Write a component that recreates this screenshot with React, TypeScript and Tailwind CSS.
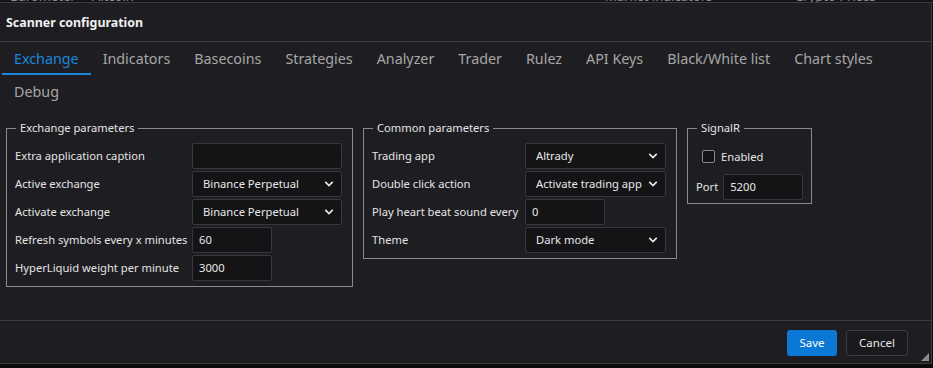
import React from "react";

const Chevron = () => (
  <svg width="10" height="7" viewBox="0 0 10 7" className="absolute right-[7px] top-1/2 -translate-y-1/2">
    <path d="M1.3 1.4 L5 5 L8.7 1.4" fill="none" stroke="#e6e6e6" strokeWidth="1.7" />
  </svg>
);

const Input = ({ value = "", w }: { value?: string; w: string }) => (
  <div className={`${w} h-[26px] bg-[#141417] border border-[#38383c] rounded-[2px] flex items-center pl-[6px] pt-[1px] text-[#e8e8e8]`}>
    {value}
  </div>
);

const Select = ({ value, w }: { value: string; w: string }) => (
  <div className={`${w} relative h-[26px] bg-[#141417] border border-[#38383c] rounded-[2px] flex items-center pl-[10px] pt-[1px] text-[#e8e8e8]`}>
    {value}
    <Chevron />
  </div>
);

const Row = ({ label, labelW, children }: { label: string; labelW: string; children: React.ReactNode }) => (
  <div className="flex items-center h-[26px]">
    <div className={`${labelW} shrink-0 whitespace-nowrap pt-[2px] text-[#e4e4e4]`}>{label}</div>
    {children}
  </div>
);

const tabs = ["Exchange", "Indicators", "Basecoins", "Strategies", "Analyzer", "Trader", "Rulez", "API Keys", "Black/White list", "Chart styles", "Debug"];

export default function App() {
  return (
    <div className="w-[933px] h-[368px] bg-[#0b0b0c] overflow-hidden text-[11.2px]" style={{ fontFamily: '"Noto Sans", "Open Sans", sans-serif' }}>
      <div className="relative h-[3px] overflow-hidden bg-[#141416] border-b border-[#3a3a3e]">
        <span className="absolute left-[10px] top-[-11px] text-[13px] leading-[14px] text-[#8c8c8c]">Barometer</span>
        <span className="absolute left-[92px] top-[-11px] text-[13px] leading-[14px] text-[#8c8c8c]">Altcoin</span>
        <span className="absolute left-[605px] top-[-11px] text-[13px] leading-[14px] text-[#8c8c8c]">Market indicators</span>
        <span className="absolute left-[795px] top-[-11px] text-[13px] leading-[14px] text-[#8c8c8c]">Crypto Prices</span>
      </div>
      <div className="relative w-[932px] h-[361px] bg-[#1e1e22] border-r border-b border-[#3c3c40] flex flex-col">
        <div className="h-[39px] shrink-0 flex items-center px-[6px] pt-[3px] font-bold text-[12.4px] text-[#f0f0f0] border-b border-[#3c3c40]">
          Scanner configuration
        </div>
        <div className="flex flex-wrap pl-[2px] text-[14.3px] text-[#a6a6a6]">
          {tabs.map((t, i) => (
            <div
              key={t}
              className={`h-[33px] px-[12px] flex items-center ${i === 0 ? "text-[#1c86dc] border-b-2 border-[#1c86dc] pt-[3px]" : "pt-[1px]"}`}
            >
              {t}
            </div>
          ))}
        </div>
        <div className="flex items-start gap-[10px] pl-[6px] pt-[12px]">
          <fieldset className="w-[347px] border border-[#8a8a8a] pl-[8px] pr-[10px] pb-[5px] pt-[6px] flex flex-col gap-[2px]">
            <legend className="ml-[1px] px-[4px] text-[#e4e4e4]">Exchange parameters</legend>
            <Row label="Extra application caption" labelW="w-[177px]"><Input w="w-[150px]" /></Row>
            <Row label="Active exchange" labelW="w-[177px]"><Select w="w-[150px]" value="Binance Perpetual" /></Row>
            <Row label="Activate exchange" labelW="w-[177px]"><Select w="w-[150px]" value="Binance Perpetual" /></Row>
            <Row label="Refresh symbols every x minutes" labelW="w-[177px]"><Input w="w-[80px]" value="60" /></Row>
            <Row label="HyperLiquid weight per minute" labelW="w-[177px]"><Input w="w-[80px]" value="3000" /></Row>
          </fieldset>
          <fieldset className="w-[313px] border border-[#8a8a8a] pl-[8px] pr-[10px] pb-[5px] pt-[6px] flex flex-col gap-[2px]">
            <legend className="ml-[1px] px-[4px] text-[#e4e4e4]">Common parameters</legend>
            <Row label="Trading app" labelW="w-[153px]"><Select w="w-[141px]" value="Altrady" /></Row>
            <Row label="Double click action" labelW="w-[153px]"><Select w="w-[141px]" value="Activate trading app" /></Row>
            <Row label="Play heart beat sound every" labelW="w-[153px]"><Input w="w-[80px]" value="0" /></Row>
            <Row label="Theme" labelW="w-[153px]"><Select w="w-[141px]" value="Dark mode" /></Row>
          </fieldset>
          <fieldset className="w-[125px] border border-[#8a8a8a] pl-[8px] pr-[8px] pb-[3px] pt-[12px] flex flex-col gap-[9px]">
            <legend className="ml-[1px] px-[4px] text-[#e4e4e4]">SignalR</legend>
            <div className="flex items-center gap-[6px] pl-[6px] h-[16px] text-[#e4e4e4]">
              <div className="w-[13px] h-[13px] border border-[#8a8a8a] rounded-[2px] bg-[#141417]" />
              <span className="pt-[1px]">Enabled</span>
            </div>
            <div className="flex items-center gap-[5px] text-[#e4e4e4]">
              <span className="pt-[2px]">Port</span>
              <Input w="w-[80px]" value="5200" />
            </div>
          </fieldset>
        </div>
        <div className="mt-auto h-[43px] shrink-0 border-t border-[#3c3c40] flex items-center justify-end gap-[9px] pr-[23px] pt-[2px]">
          <div className="w-[50px] h-[26px] rounded-[3px] bg-[#0a78d4] text-white flex items-center justify-center text-[11.5px]">Save</div>
          <div className="w-[62px] h-[26px] rounded-[3px] border border-[#3c3c40] bg-[#1a1a1d] text-[#e8e8e8] flex items-center justify-center text-[11.5px]">Cancel</div>
        </div>
        <svg width="8" height="8" viewBox="0 0 8 8" className="absolute right-[2px] bottom-[2px]">
          <path d="M8 0 L8 8 L0 8 Z" fill="#8a8a8a" />
        </svg>
      </div>
    </div>
  );
}
